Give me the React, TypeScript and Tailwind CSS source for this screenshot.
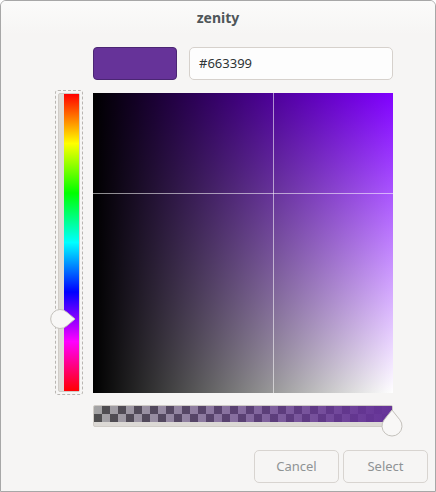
import React from "react";

const HEX = "#663399";

function HueKnob() {
  return (
    <svg width="30" height="24" viewBox="0 0 30 24" className="absolute left-[-6px] top-[216px]">
      <path
        d="M25 12 L16.6 5 A9.5 9.5 0 1 0 16.6 19 Z"
        fill="#f8f7f6"
        stroke="#c3c0bb"
        strokeWidth="1"
      />
    </svg>
  );
}

function AlphaKnob() {
  return (
    <svg width="24" height="32" viewBox="0 0 24 32" className="absolute left-[287px] top-[1px]">
      <path
        d="M12 4 L19.8 13.75 A10 10 0 1 1 4.2 13.75 Z"
        fill="#f8f7f6"
        stroke="#c3c0bb"
        strokeWidth="1"
      />
    </svg>
  );
}

export default function App() {
  return (
    <div
      className="w-[436px] h-[492px] flex flex-col bg-[#f6f5f4] border border-[#a7a7a7] rounded-t-[6px] overflow-hidden"
      style={{ fontFamily: '"Noto Sans", "Open Sans", sans-serif' }}
    >
      {/* title bar */}
      <div className="h-[34px] shrink-0 flex items-center justify-center bg-gradient-to-b from-[#fbfbfa] to-[#f6f5f4]">
        <span className="text-[14px] font-bold text-[#4f5659] leading-none">zenity</span>
      </div>

      <div className="mt-[12px] ml-[54px] grid grid-cols-[28px_300px] gap-x-[10px] gap-y-[10px]">
        {/* row 1: swatch + entry */}
        <div />
        <div className="flex gap-[12px] h-[33px]">
          <div className="w-[84px] rounded-[4px] border border-[#4b2673] bg-[#663399]" />
          <div className="flex-1 rounded-[5px] border border-[#d6d1cc] bg-[#fdfdfd] flex items-center px-[9px] text-[13px] text-[#2e3436]">
            {HEX}
          </div>
        </div>

        {/* row 2: hue slider + plane */}
        <div className="relative h-[305px] rounded-[3px] border border-dashed border-[#b9b6b2] p-[2px]">
          <div className="h-full flex rounded-[2px] bg-[#dedbd7] border border-[#d0ccc7]">
            <div className="w-[5px]" />
            <div className="flex-1 bg-[linear-gradient(to_bottom,#ff0000,#ffff00,#00ff00,#00ffff,#0000ff,#ff00ff,#ff0000)]" />
          </div>
          <HueKnob />
        </div>
        <div className="relative mt-[3px] h-[300px] bg-[linear-gradient(to_right,#000000,rgba(0,0,0,0)),linear-gradient(to_bottom,#8000ff,#ffffff)]">
          <div className="absolute left-[180px] top-0 bottom-0 w-px bg-white/55" />
          <div className="absolute top-[100px] left-0 right-0 h-px bg-white/55" />
        </div>

        {/* row 3: alpha slider */}
        <div />
        <div className="relative h-[23px]">
          <div className="h-[22px] rounded-[2px] bg-[#dcd9d5] border border-[#d0ccc7] overflow-hidden">
            <div className="h-[16px] bg-[linear-gradient(to_right,rgba(102,51,153,0),#663399),conic-gradient(#4e4e4e_25%,#a4a4a4_0_50%,#4e4e4e_0_75%,#a4a4a4_0)] bg-[length:100%_100%,16px_16px]" />
          </div>
          <AlphaKnob />
        </div>
      </div>

      {/* buttons */}
      <div className="mt-auto mb-[8px] mr-[7px] flex justify-end gap-[4px]">
        {["Cancel", "Select"].map((label) => (
          <button
            key={label}
            className="w-[85px] h-[33px] rounded-[5px] border border-[#d8d4d0] bg-[#f6f5f4] text-[13px] text-[#8f9394]"
          >
            {label}
          </button>
        ))}
      </div>
    </div>
  );
}
